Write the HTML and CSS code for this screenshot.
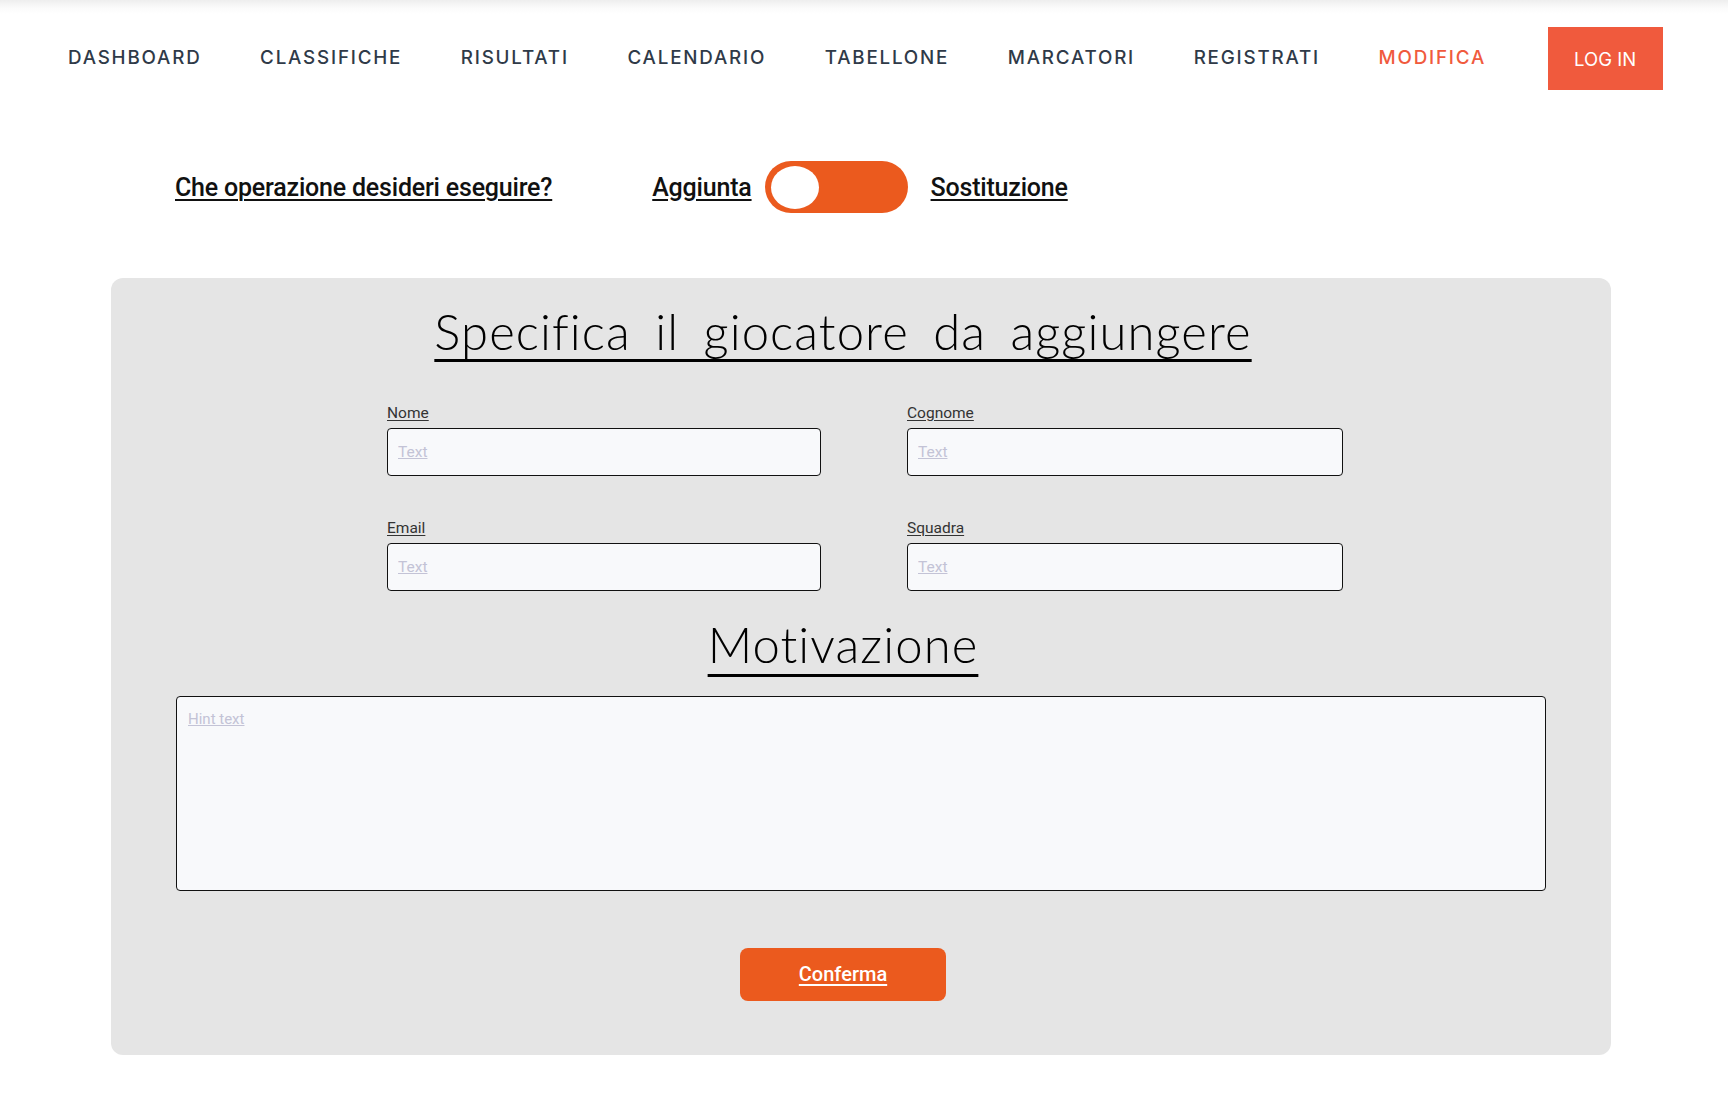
FILE: index.html
```html
<!DOCTYPE html>
<html lang="it">
<head>
<meta charset="utf-8">
<title>Modifica</title>
<link rel="stylesheet" href="styles.css">
</head>
<body>
<header class="topbar">
  <nav class="nav">
    <a class="nav-link" href="#">DASHBOARD</a>
    <a class="nav-link" href="#">CLASSIFICHE</a>
    <a class="nav-link" href="#">RISULTATI</a>
    <a class="nav-link" href="#">CALENDARIO</a>
    <a class="nav-link" href="#">TABELLONE</a>
    <a class="nav-link" href="#">MARCATORI</a>
    <a class="nav-link" href="#">REGISTRATI</a>
    <a class="nav-link nav-link-active" href="#">MODIFICA</a>
    <a class="login-btn" href="#">LOG IN</a>
  </nav>
</header>

<section class="operation">
  <span class="op-question">Che operazione desideri eseguire?</span>
  <span class="op-option op-add">Aggiunta</span>
  <span class="toggle"><span class="toggle-knob"></span></span>
  <span class="op-option op-replace">Sostituzione</span>
</section>

<main class="panel">
  <h1 class="panel-title">Specifica il giocatore da aggiungere</h1>
  <div class="form-grid">
    <div class="field">
      <label class="field-label">Nome</label>
      <input class="field-input" type="text" placeholder="Text">
    </div>
    <div class="field">
      <label class="field-label">Cognome</label>
      <input class="field-input" type="text" placeholder="Text">
    </div>
    <div class="field">
      <label class="field-label">Email</label>
      <input class="field-input" type="text" placeholder="Text">
    </div>
    <div class="field">
      <label class="field-label">Squadra</label>
      <input class="field-input" type="text" placeholder="Text">
    </div>
  </div>
  <h2 class="panel-title panel-title-sub">Motivazione</h2>
  <textarea class="reason" placeholder="Hint text"></textarea>
  <div class="actions">
    <button class="confirm-btn" type="button">Conferma</button>
  </div>
</main>
</body>
</html>
```

FILE: styles.css
```css
* {
  box-sizing: border-box;
}

html, body {
  margin: 0;
  padding: 0;
  background: #ffffff;
}

body {
  font-family: Roboto, "Noto Sans", sans-serif;
  color: #111111;
  min-height: 1117px;
}

.topbar {
  background: linear-gradient(to bottom, #eeeeee 0, #fbfbfb 8px, #ffffff 14px);
  padding-top: 27px;
}

.nav {
  display: flex;
  align-items: center;
  gap: 58.6px;
  padding-left: 68px;
  height: 63px;
}

.nav-link {
  font-family: Inter, "Noto Sans", sans-serif;
  font-weight: 500;
  font-size: 18.8px;
  letter-spacing: 1.8px;
  color: #2f3a48;
  text-decoration: none;
  line-height: 1;
}

.nav-link-active {
  color: #f05a3d;
}

.login-btn {
  margin-left: 3px;
  width: 115px;
  height: 63px;
  display: flex;
  align-items: center;
  justify-content: center;
  background: #f05a3d;
  color: #ffffff;
  font-family: Inter, "Noto Sans", sans-serif;
  font-size: 18.5px;
  font-weight: 400;
  text-decoration: none;
}

.operation {
  display: flex;
  align-items: center;
  margin-top: 71px;
  padding-left: 175px;
  height: 52px;
}

.op-question,
.op-option {
  font-family: Roboto, "Noto Sans", sans-serif;
  font-weight: 500;
  font-size: 25px;
  color: #111111;
  text-decoration: underline;
  text-decoration-thickness: 2px;
  text-underline-offset: 3px;
  letter-spacing: -0.2px;
}

.op-add {
  margin-left: 100px;
}

.toggle {
  margin-left: 13px;
  width: 143px;
  height: 52px;
  border-radius: 26px;
  background: #eb5a1e;
  display: flex;
  align-items: center;
  padding-left: 6px;
}

.toggle-knob {
  width: 48px;
  height: 43px;
  border-radius: 50%;
  background: #ffffff;
}

.op-replace {
  margin-left: 23px;
}

.panel {
  margin: 65px 0 0 111px;
  width: 1500px;
  background: #e5e5e5;
  border-radius: 12px;
  padding: 24px 65px 54px;
}

.panel-title {
  margin: 0 36px 0 0;
  text-align: center;
  font-family: Lato, "Open Sans", sans-serif;
  font-weight: 300;
  font-size: 49px;
  line-height: 1.2;
  color: #000000;
  letter-spacing: 1.1px;
  word-spacing: 10px;
  font-variant-ligatures: none;
  text-decoration: underline;
  text-decoration-thickness: 3px;
  text-underline-offset: 9px;
}

.panel-title-sub {
  margin-top: 24px;
  text-underline-offset: 11px;
}

.form-grid {
  display: grid;
  grid-template-columns: 434px 436px;
  column-gap: 86px;
  row-gap: 42px;
  margin: 42px 0 0 211px;
}

.field {
  display: flex;
  flex-direction: column;
}

.field-label {
  font-size: 15.5px;
  line-height: 20px;
  color: #333333;
  text-decoration: underline;
  text-underline-offset: 2px;
  margin-bottom: 5px;
}

.field-input {
  height: 48px;
  width: 100%;
  border: 1px solid #111111;
  border-radius: 4px;
  background: #f8f9fb;
  padding: 0 10px;
  font-family: Roboto, "Noto Sans", sans-serif;
  font-size: 15.5px;
  color: #111111;
  outline: none;
}

.field-input::placeholder,
.reason::placeholder {
  color: #c3c3d6;
  text-decoration: underline;
}

.reason {
  display: block;
  width: 100%;
  height: 195px;
  margin-top: 22px;
  border: 1px solid #111111;
  border-radius: 4px;
  background: #f8f9fb;
  padding: 13px 11px;
  font-family: Roboto, "Noto Sans", sans-serif;
  font-size: 15px;
  resize: none;
  outline: none;
}

.actions {
  display: flex;
  justify-content: center;
  padding-right: 36px;
  margin-top: 57px;
}

.confirm-btn {
  width: 206px;
  height: 53px;
  border: none;
  border-radius: 8px;
  background: #eb5a1e;
  color: #ffffff;
  font-family: Roboto, "Noto Sans", sans-serif;
  font-weight: 500;
  font-size: 20px;
  text-decoration: underline;
  text-underline-offset: 3px;
  cursor: pointer;
}
```
